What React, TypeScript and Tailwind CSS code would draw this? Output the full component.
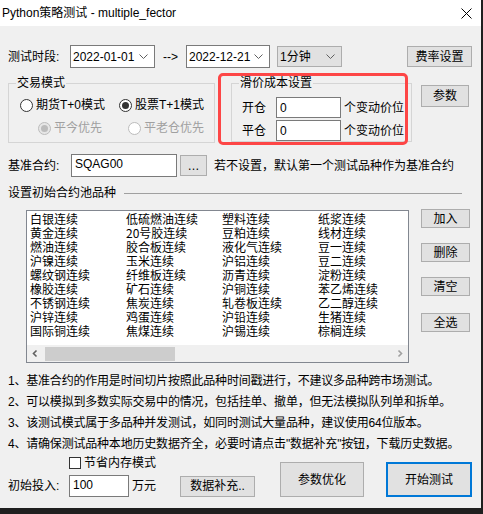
import React from 'react';

const columns = [
  ['白银连续', '黄金连续', '燃油连续', '沪镍连续', '螺纹钢连续', '橡胶连续', '不锈钢连续', '沪锌连续', '国际铜连续'],
  ['低硫燃油连续', '20号胶连续', '胶合板连续', '玉米连续', '纤维板连续', '矿石连续', '焦炭连续', '鸡蛋连续', '焦煤连续'],
  ['塑料连续', '豆粕连续', '液化气连续', '沪铝连续', '沥青连续', '沪铜连续', '轧卷板连续', '沪铅连续', '沪锡连续'],
  ['纸浆连续', '线材连续', '豆一连续', '豆二连续', '淀粉连续', '苯乙烯连续', '乙二醇连续', '生猪连续', '棕榈连续'],
];

const notes = [
  '1、基准合约的作用是时间切片按照此品种时间戳进行，不建议多品种跨市场测试。',
  '2、可以模拟到多数实际交易中的情况，包括挂单、撤单，但无法模拟队列单和拆单。',
  '3、该测试模式属于多品种并发测试，如同时测试大量品种，建议使用64位版本。',
  '4、请确保测试品种本地历史数据齐全，必要时请点击"数据补充"按钮，下载历史数据。',
];

function Chevron({ className = '' }: { className?: string }) {
  return (
    <svg width="9" height="5" viewBox="0 0 9 5" className={className}>
      <polyline points="0.5,0.5 4.5,4.5 8.5,0.5" fill="none" stroke="#606060" strokeWidth="1" />
    </svg>
  );
}

function Combo({ value, gray = false, width }: { value: string; gray?: boolean; width: string }) {
  return (
    <div
      className={`${width} flex items-center justify-between pl-[2px] pr-[6px] border ${
        gray ? 'h-[21px] bg-[#e1e1e1] border-[#adadad]' : 'h-[23px] bg-white border-[#7a7a7a]'
      }`}
    >
      <span className="text-[12px] leading-[14px]">{value}</span>
      <Chevron />
    </div>
  );
}

function Btn({ children, className = '' }: { children: React.ReactNode; className?: string }) {
  return (
    <div className={`flex items-center justify-center bg-[#e1e1e1] border border-[#adadad] text-[12px] leading-[14px] ${className}`}>
      {children}
    </div>
  );
}

function Radio({ label, checked = false, disabled = false, className = '' }: { label: string; checked?: boolean; disabled?: boolean; className?: string }) {
  return (
    <div className={`flex items-center h-[16px] ${className}`}>
      <span
        className={`w-[13px] h-[13px] rounded-full border flex items-center justify-center ${
          disabled ? (checked ? 'border-[#bcbcbc] bg-[#e6e6e6]' : 'border-[#bcbcbc] bg-white') : 'border-[#333333] bg-white'
        }`}
      >
        {checked && <span className={`w-[7px] h-[7px] rounded-full ${disabled ? 'bg-[#bcbcbc]' : 'bg-[#333333]'}`} />}
      </span>
      <span className={`ml-[3px] text-[12px] leading-[16px] ${disabled ? 'text-[#a0a0a0]' : 'text-black'}`}>{label}</span>
    </div>
  );
}

function Legend({ children }: { children: React.ReactNode }) {
  return <legend className="ml-[7px] px-[1px] text-[12px] leading-[16px]">{children}</legend>;
}

export default function App() {
  return (
    <div className="w-[483px] h-[514px] bg-[#1f1f1f] font-['Liberation_Sans','Noto_Sans_CJK_SC',sans-serif] text-black">
      <div className="w-[481px] h-[508px] bg-[#f0f0f0] flex flex-col">
        {/* title bar */}
        <div className="h-[26px] bg-white flex items-center justify-between pl-[2px] pr-[9px]">
          <span className="text-[12px] leading-[16px]">Python策略测试 - multiple_fector</span>
          <svg width="11" height="11" viewBox="0 0 11 11">
            <path d="M0.5 0.5 L10.5 10.5 M10.5 0.5 L0.5 10.5" stroke="#000" strokeWidth="1" />
          </svg>
        </div>

        <div className="pl-[8px] flex flex-col">
          {/* period row */}
          <div className="mt-[19px] h-[23px] flex items-center">
            <span className="w-[62px] text-[12px] leading-[16px]">测试时段:</span>
            <Combo value="2022-01-01" width="w-[85px]" />
            <span className="w-[31px] text-center text-[12px] leading-[16px]">--&gt;</span>
            <Combo value="2022-12-21" width="w-[84px]" />
            <div className="ml-[7px]">
              <Combo value="1分钟" gray width="w-[65px]" />
            </div>
            <Btn className="ml-[65px] w-[65px] h-[21px]">费率设置</Btn>
          </div>

          {/* mode + slippage */}
          <div className="relative mt-[7px] flex items-start">
            <fieldset className="w-[207px] border border-[#d5d5d5]">
              <Legend>交易模式</Legend>
              <div className="pl-[11px] pt-[6px] pb-[6px] flex flex-col">
                <div className="flex">
                  <Radio label="期货T+0模式" className="w-[99px]" />
                  <Radio label="股票T+1模式" checked />
                </div>
                <div className="mt-[7px] pl-[18px] flex">
                  <Radio label="平今优先" checked disabled className="w-[90px]" />
                  <Radio label="平老仓优先" disabled />
                </div>
              </div>
            </fieldset>

            <fieldset className="ml-[16px] w-[181px] border border-[#d5d5d5]">
              <Legend>滑价成本设置</Legend>
              <div className="pl-[10px] pt-[6px] flex flex-col">
                <div className="flex items-center">
                  <span className="w-[34px] text-[12px] leading-[16px]">开仓</span>
                  <div className="w-[65px] h-[21px] bg-white border border-[#7a7a7a] pl-[3px] flex items-center text-[12px]">0</div>
                  <span className="ml-[3px] text-[12px] leading-[16px]">个变动价位</span>
                </div>
                <div className="mt-[2px] flex items-center">
                  <span className="w-[34px] text-[12px] leading-[16px]">平仓</span>
                  <div className="w-[65px] h-[21px] bg-white border border-[#7a7a7a] pl-[3px] flex items-center text-[12px]">0</div>
                  <span className="ml-[3px] text-[12px] leading-[16px]">个变动价位</span>
                </div>
              </div>
            </fieldset>

            <Btn className="ml-[9px] mt-[10px] w-[48px] h-[22px]">参数</Btn>

            {/* red annotation */}
            <div className="absolute left-[210px] top-[-2px] w-[190px] h-[72px] border-[3px] border-[#fd4646] rounded-[5px] pointer-events-none" />
          </div>

          {/* base contract */}
          <div className="mt-[11px] h-[23px] flex items-center">
            <span className="w-[63px] text-[12px] leading-[16px]">基准合约:</span>
            <div className="w-[106px] h-[23px] bg-white border border-[#7a7a7a] pl-[3px] pt-[2px] text-[12px] leading-[14px]">SQAG00</div>
            <Btn className="ml-[3px] w-[27px] h-[21px]">…</Btn>
            <span className="ml-[7px] text-[12px] leading-[16px]">若不设置，默认第一个测试品种作为基准合约</span>
          </div>

          {/* pool header */}
          <div className="mt-[8px] h-[16px] flex items-center">
            <span className="text-[12px] leading-[16px]">设置初始合约池品种</span>
            <div className="ml-[8px] w-[338px] h-px bg-[#a0a0a0]" />
          </div>

          {/* list + buttons */}
          <div className="mt-[9px] flex items-start">
            <div className="ml-[18px] w-[383px] h-[153px] bg-white border border-[#828790] flex flex-col overflow-hidden">
              <div className="flex-1 flex pl-[3px] pt-px overflow-hidden font-['Noto_Sans_CJK_SC',sans-serif]">
                {columns.map((col, i) => (
                  <div key={i} className="w-[96px] shrink-0 flex flex-col">
                    {col.map((item) => (
                      <span key={item} className="text-[12px] leading-[14px] whitespace-nowrap">{item}</span>
                    ))}
                  </div>
                ))}
              </div>
              <div className="h-[17px] bg-[#f0f0f0] flex items-center">
                <svg width="17" height="17" viewBox="0 0 17 17" className="shrink-0">
                  <polyline points="9.5,5.5 6.5,8.5 9.5,11.5" fill="none" stroke="#606060" strokeWidth="1.6" />
                </svg>
                <div className="ml-[1px] w-[130px] h-[14px] bg-[#cdcdcd]" />
                <div className="flex-1" />
                <svg width="17" height="17" viewBox="0 0 17 17" className="shrink-0">
                  <polyline points="7.5,5.5 10.5,8.5 7.5,11.5" fill="none" stroke="#a0a0a0" strokeWidth="1.6" />
                </svg>
              </div>
            </div>
            <div className="ml-[12px] flex flex-col">
              <Btn className="mt-[-1px] w-[49px] h-[19px]">加入</Btn>
              <Btn className="mt-[15px] w-[49px] h-[19px]">删除</Btn>
              <Btn className="mt-[15px] w-[49px] h-[19px]">清空</Btn>
              <Btn className="mt-[17px] w-[49px] h-[19px]">全选</Btn>
            </div>
          </div>

          {/* notes */}
          <div className="mt-[8px] flex flex-col">
            {notes.map((n) => (
              <span key={n} className="text-[12px] leading-[21px] whitespace-nowrap tracking-[-0.2px]">{n}</span>
            ))}
          </div>

          {/* bottom */}
          <div className="flex items-start">
            <div className="flex flex-col">
              <div className="mt-[1px] h-[13px] pl-[61px] flex items-center">
                <span className="w-[12px] h-[12px] bg-white border border-[#333333]" />
                <span className="ml-[3px] text-[12px] leading-[16px]">节省内存模式</span>
              </div>
              <div className="mt-[6px] h-[22px] flex items-center">
                <span className="w-[61px] text-[12px] leading-[16px]">初始投入:</span>
                <div className="w-[60px] h-[22px] bg-white border border-[#7a7a7a] pl-[3px] pt-[2px] text-[12px] leading-[14px]">100</div>
                <span className="ml-[3px] text-[12px] leading-[16px]">万元</span>
                <Btn className="ml-[24px] w-[75px] h-[21px]">数据补充..</Btn>
              </div>
            </div>
            <Btn className="ml-[25px] mt-[7px] w-[84px] h-[35px]">参数优化</Btn>
            <Btn className="ml-[22px] mt-[7px] w-[86px] h-[35px] !border-2 !border-[#0078d7]">开始测试</Btn>
          </div>
        </div>
      </div>
    </div>
  );
}
